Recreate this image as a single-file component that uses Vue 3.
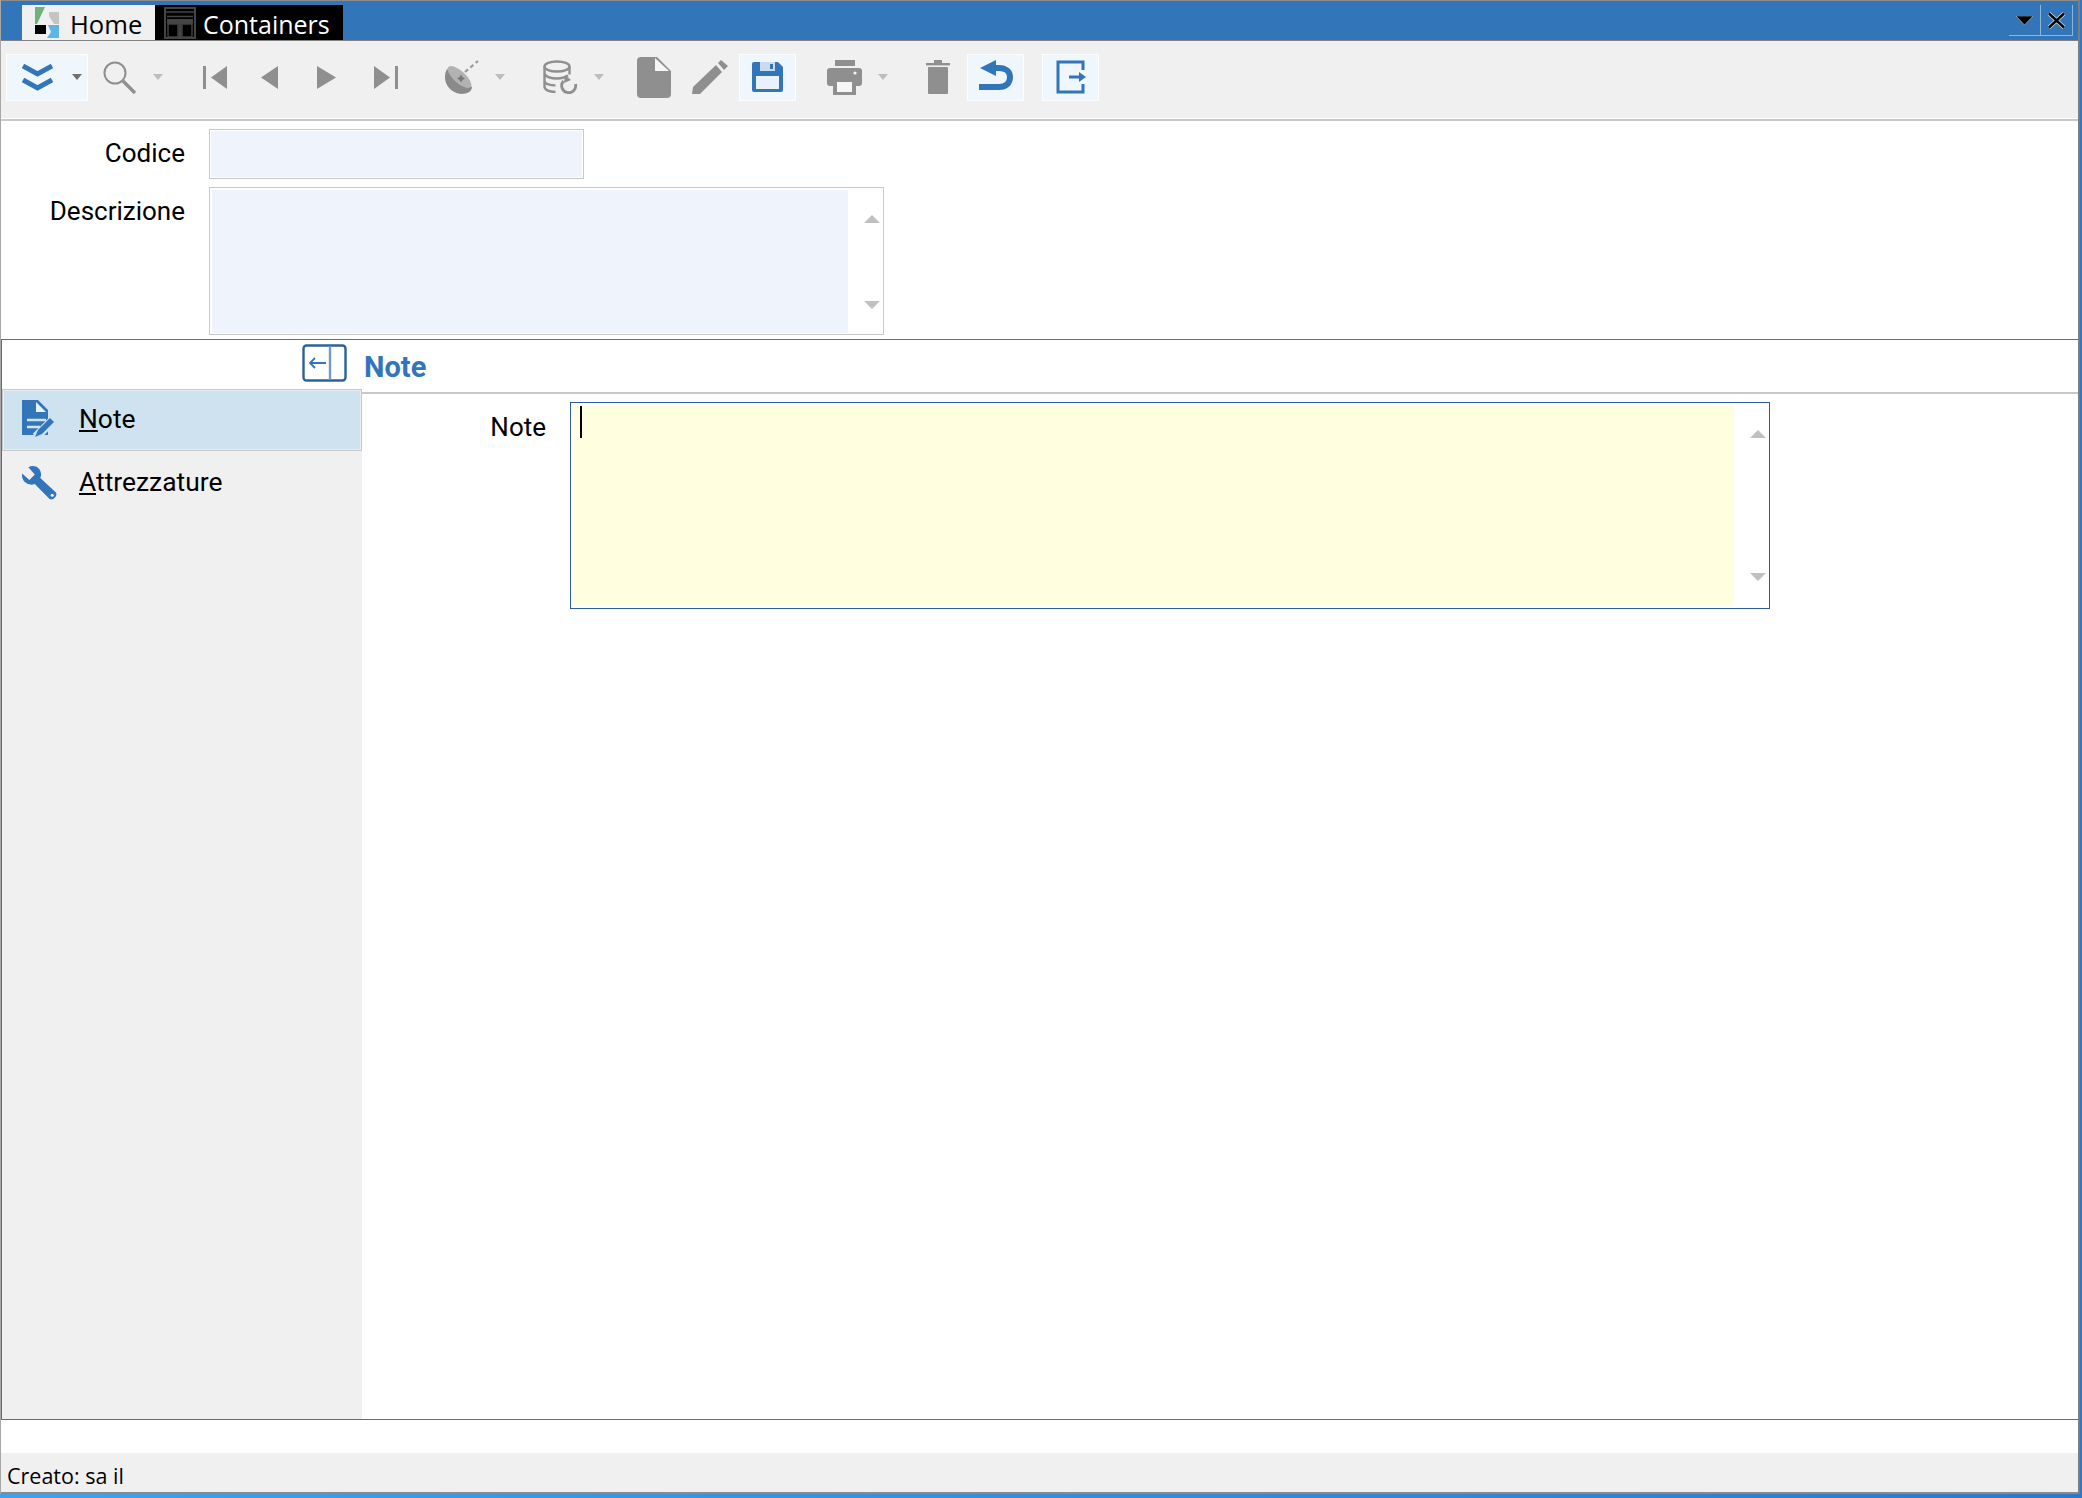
<template>
  <div class="screen">
    <div class="window">
      <div class="titlebar">
        <div class="tab tab-home">
          <svg class="logo" width="24" height="31" viewBox="0 0 24 31">
            <polygon points="0,0 10,0 2,17 0,17" fill="#6fb37b"/>
            <polygon points="14,5 24,5 24,17 19,17 14,9" fill="#c4c4c4"/>
            <rect x="0" y="18" width="11" height="9" fill="#000"/>
            <polygon points="13,18 24,18 24,31 12,31 16,25" fill="#5bb6e6"/>
          </svg>
          <span>Home</span>
        </div>
        <div class="tab tab-active">
          <svg width="32" height="32" viewBox="0 0 32 32" fill="none" stroke="#454545">
            <rect x="1" y="1" width="30" height="30" stroke-width="2"/>
            <path d="M1 5h30M3 9.5h26" stroke-width="1.4"/>
            <rect x="3" y="12" width="26" height="5" fill="#454545" stroke="none"/>
            <rect x="4" y="17" width="10" height="13" stroke-width="1.4"/>
            <rect x="18" y="17" width="10" height="13" stroke-width="1.4"/>
            <path d="M16 14v17" stroke-width="3"/>
          </svg>
          <span>Containers</span>
        </div>
        <div class="win-controls">
          <div class="win-btn win-menu">
            <svg width="17" height="9" viewBox="0 0 17 9"><polygon points="0,0 17,0 8.5,9" fill="#000" stroke="#cfd8e2" stroke-width="0.5"/></svg>
          </div>
          <div class="win-btn win-close">
            <svg width="19" height="17" viewBox="0 0 19 17" fill="none">
              <path d="M2 1.5l15 14M17 1.5l-15 14" stroke="#d5dde6" stroke-width="4"/>
              <path d="M2 1.5l15 14M17 1.5l-15 14" stroke="#000" stroke-width="2.4"/>
            </svg>
          </div>
        </div>
      </div>

      <div class="toolbar">
        <div class="tbtn t-more">
          <svg width="31" height="27" viewBox="0 0 31 27" fill="none" stroke="#3375b9" stroke-width="5">
            <path d="M1 2l14.5 8L30 2M1 16l14.5 8L30 16"/>
          </svg>
          <i class="caret dark"></i>
        </div>
        <svg class="t-search" width="34" height="33" viewBox="0 0 34 33" fill="none" stroke="#8f8f8f">
          <circle cx="12" cy="12" r="10.5" stroke-width="2"/>
          <path d="M20 20l12 12" stroke-width="3.4"/>
        </svg>
        <i class="caret c16"></i>
        <svg class="t-first" width="24" height="23" viewBox="0 0 24 23" fill="#8f8f8f">
          <rect x="0" y="0" width="3" height="23"/>
          <polygon points="8,11.5 24,0 24,23"/>
        </svg>
        <svg class="t-prev" width="17" height="23" viewBox="0 0 17 23" fill="#8f8f8f"><polygon points="0,11.5 17,0 17,23"/></svg>
        <svg class="t-next" width="19" height="23" viewBox="0 0 19 23" fill="#8f8f8f"><polygon points="19,11.5 0,0 0,23"/></svg>
        <svg class="t-last" width="24" height="23" viewBox="0 0 24 23" fill="#8f8f8f">
          <rect x="21" y="0" width="3" height="23"/>
          <polygon points="16,11.5 0,0 0,23"/>
        </svg>
        <svg class="t-dish" width="35" height="34" viewBox="0 0 35 34">
          <path d="M3 9C-2 18 2 32 17 34C24 34 28 31 28 27Z" fill="#8a8a8a"/>
          <ellipse cx="15.5" cy="17" rx="15" ry="6" transform="rotate(42 15.5 17)" fill="#b2b2b2"/>
          <path d="M17 14.5l1.5 2.5 2.5 1.5-2.5 1.5-1.5 2.5-1.5-2.5-2.5-1.5 2.5-1.5Z" fill="#7a7a7a"/>
          <path d="M21 12L34 1" stroke="#9a9a9a" stroke-width="2.2" stroke-dasharray="4 3" fill="none"/>
        </svg>
        <i class="caret c16"></i>
        <svg class="t-db" width="35" height="34" viewBox="0 0 35 34" fill="none" stroke="#8f8f8f" stroke-width="2.4">
          <ellipse cx="14" cy="6.5" rx="12.5" ry="5"/>
          <path d="M1.5 6.5v20c0 3 4 5.5 11 5.5M26.5 6.5v8M1.5 14c2 3 7 4.5 12.5 4.5s8-1 11-3M1.5 22c2 2.4 6 3.4 11 3.4"/>
          <path d="M32.5 24a7 7 0 1 1-12-3" stroke-width="2.8"/>
          <polygon points="22,15 28,20 21,23" fill="#8f8f8f" stroke="none"/>
        </svg>
        <i class="caret c16"></i>
        <svg class="t-doc" width="34" height="41" viewBox="0 0 34 41">
          <path d="M4 0H20L34 14V37a4 4 0 0 1-4 4H4a4 4 0 0 1-4-4V4a4 4 0 0 1 4-4Z" fill="#8f8f8f"/>
          <polygon points="18,1 32,14 18,14" fill="#f6f6f6"/>
        </svg>
        <svg class="t-pencil" width="36" height="34" viewBox="0 0 36 34" fill="#8f8f8f">
          <polygon points="1,27 24,5 30,12 8,34 0,34"/>
          <polygon points="26,3 29,0 36,6 32,10"/>
        </svg>
        <div class="tbtn t-save">
          <svg width="31" height="30" viewBox="0 0 31 30">
            <path d="M2 0H26L31 5V28a2 2 0 0 1-2 2H2a2 2 0 0 1-2-2V2a2 2 0 0 1 2-2Z" fill="#3375b9"/>
            <rect x="8" y="0" width="15" height="9" fill="#c9dbee"/>
            <rect x="18" y="2" width="3" height="5" fill="#3375b9"/>
            <rect x="4" y="14" width="23" height="13" fill="#eaf1f8"/>
          </svg>
        </div>
        <svg class="t-print" width="35" height="35" viewBox="0 0 35 35" fill="#8f8f8f">
          <rect x="8" y="0" width="20" height="6"/>
          <rect x="0" y="8" width="35" height="18" rx="3"/>
          <rect x="6" y="20" width="23" height="15"/>
          <rect x="10" y="22" width="15" height="10" fill="#f6f6f6"/>
          <circle cx="28" cy="13" r="1.6" fill="#f6f6f6"/>
        </svg>
        <i class="caret c16"></i>
        <svg class="t-trash" width="24" height="34" viewBox="0 0 24 34" fill="#8f8f8f">
          <rect x="8" y="0" width="8" height="3"/>
          <rect x="0" y="3" width="24" height="2.4"/>
          <rect x="2" y="7" width="20" height="27" rx="1"/>
        </svg>
        <div class="tbtn t-undo">
          <svg width="34" height="34" viewBox="0 0 34 34">
            <polygon points="1,8 17,0 17,16" fill="#3375b9"/>
            <path d="M14 8H20C27 8 31 12 31 17C31 23 27 27 20 27H0" fill="none" stroke="#3375b9" stroke-width="6"/>
          </svg>
        </div>
        <div class="tbtn t-exit">
          <svg width="30" height="34" viewBox="0 0 30 34" fill="none">
            <path d="M27 10V2H2V32H27V24" stroke="#3375b9" stroke-width="3"/>
            <path d="M13 17H25" stroke="#3375b9" stroke-width="3"/>
            <polygon points="23,12 30,17 23,22" fill="#3375b9"/>
          </svg>
        </div>
      </div>

      <div class="form">
        <div class="form-row">
          <label class="lbl">Codice</label>
          <div class="input"></div>
        </div>
        <div class="form-row">
          <label class="lbl">Descrizione</label>
          <div class="memo memo-desc">
            <div class="memo-fill"></div>
            <div class="memo-bar"><i class="arrow-up"></i><i class="arrow-down"></i></div>
          </div>
        </div>
      </div>

      <div class="panel">
        <div class="side">
          <div class="side-head">
            <svg width="45" height="38" viewBox="0 0 45 38" fill="none">
              <rect x="1.5" y="1.5" width="42" height="35" rx="3" stroke="#2d6296" stroke-width="2.4"/>
              <path d="M28 2v34" stroke="#6f9bc4" stroke-width="2.4"/>
              <path d="M24 19H8M13 14l-5 5 5 5" stroke="#3375b9" stroke-width="1.8"/>
            </svg>
          </div>
          <div class="nav">
            <div class="nav-item selected">
              <svg class="nav-icon" width="34" height="39" viewBox="0 0 34 39">
                <path d="M1 1H17L27 11V36H1Z" fill="#3375b9"/>
                <polygon points="15,3 25,13 15,13" fill="#e8f1f8"/>
                <path d="M6 21H25M6 28H19" stroke="#cfe2f0" stroke-width="2.4"/>
                <path d="M15 38L32 21" stroke="#cfe2f0" stroke-width="9"/>
                <path d="M14 38l3-7L29 19l4 4L21 35Z" fill="#3375b9"/>
              </svg>
              <span><u>N</u>ote</span>
            </div>
            <div class="nav-item">
              <svg class="nav-icon wrench" width="36" height="36" viewBox="0 0 34 34">
                <path d="M1 9L8 15L13 10L7 3C12 0 19 3 19 10C19 11 19 12 18 13L33 27C35 30 30 35 27 33L13 19C7 21 0 17 1 9Z" fill="#3375b9"/>
                <circle cx="29.5" cy="29.5" r="1.5" fill="#f0f0f0"/>
              </svg>
              <span><u>A</u>ttrezzature</span>
            </div>
          </div>
        </div>
        <div class="detail">
          <div class="detail-head">Note</div>
          <div class="detail-body">
            <label class="lbl lbl-note">Note</label>
            <div class="memo memo-note">
              <div class="memo-fill"><div class="cursor"></div></div>
              <div class="memo-bar"><i class="arrow-up"></i><i class="arrow-down"></i></div>
            </div>
          </div>
        </div>
      </div>

      <div class="spacer"></div>
      <div class="status">Creato: sa il</div>
    </div>
  </div>
</template>

<script setup>
</script>

<style>
html, body {
  margin: 0;
  padding: 0;
}
</style>

<style scoped>
.screen {
  width: 2082px;
  height: 1498px;
  overflow: hidden;
  background: linear-gradient(90deg, #3fa2e8, #2f78c8);
}

.window {
  width: 2080px;
  height: 1494px;
  box-sizing: border-box;
  display: flex;
  flex-direction: column;
  background: #fff;
  border-left: 1px solid #a8a8a8;
  border-right: 2px solid #7d7d7d;
}

.titlebar {
  height: 41px;
  flex-shrink: 0;
  box-sizing: border-box;
  display: flex;
  align-items: flex-end;
  padding-left: 21px;
  background: #3375b9;
  border-top: 1px solid #8c8c8c;
  border-bottom: 1px solid #808080;
}

.tab {
  height: 35px;
  display: flex;
  align-items: center;
  font-family: "Open Sans", "Noto Sans", sans-serif;
  font-size: 25px;
  white-space: nowrap;
}

.tab span {
  margin-top: 3px;
}

.tab-home {
  width: 133px;
  box-sizing: border-box;
  padding-left: 13px;
  gap: 11px;
  font-size: 25.6px;
  background: #f0f0f0;
  color: #000;
}

.tab-active {
  width: 188px;
  box-sizing: border-box;
  padding-left: 9px;
  gap: 7px;
  background: #000;
  color: #fff;
}

.win-controls {
  margin-left: auto;
  margin-right: 5px;
  align-self: flex-start;
  margin-top: 4px;
  display: flex;
  height: 30px;
  border-bottom: 1px solid #8db5da;
}

.win-btn {
  display: flex;
  align-items: center;
  justify-content: center;
}

.win-menu {
  width: 31px;
}

.win-close {
  width: 31px;
  border-left: 1px solid #8db5da;
  border-right: 1px solid #8db5da;
}

.toolbar {
  height: 80px;
  flex-shrink: 0;
  box-sizing: border-box;
  display: flex;
  align-items: center;
  padding: 0 0 6px 5px;
  background: #f0f0f0;
  border-bottom: 2px solid #c8c8c8;
  box-shadow: inset 0 -1px 0 #fff;
}

.tbtn {
  height: 47px;
  box-sizing: border-box;
  flex-shrink: 0;
  display: flex;
  align-items: center;
  justify-content: center;
  background: #eff6fc;
  border: 1px solid #fbfdff;
}

.t-more {
  width: 82px;
  justify-content: flex-start;
  padding-left: 15px;
}

.t-more .caret {
  margin-left: 19px;
}

.caret {
  width: 0;
  height: 0;
  flex-shrink: 0;
  border-left: 5.5px solid transparent;
  border-right: 5.5px solid transparent;
  border-top: 6px solid #bdbdbd;
}

.caret.dark {
  border-top-color: #707070;
}

.c16 {
  margin-left: 16px;
}

.toolbar > svg {
  flex-shrink: 0;
}

.t-search { margin-left: 15px; }
.t-first { margin-left: 40px; }
.t-prev { margin-left: 34px; }
.t-next { margin-left: 39px; }
.t-last { margin-left: 38px; }
.t-dish { margin-left: 46px; }
.t-db { margin-left: 38px; }
.t-doc { margin-left: 33px; }
.t-pencil { margin-left: 21px; }
.t-save { width: 57px; margin-left: 11px; }
.t-print { margin-left: 31px; }
.t-trash { margin-left: 38px; }
.t-undo { width: 57px; margin-left: 17px; }
.t-exit { width: 57px; margin-left: 18px; }

.form {
  height: 218px;
  flex-shrink: 0;
  box-sizing: border-box;
  padding-top: 8px;
  display: flex;
  flex-direction: column;
  gap: 8px;
}

.form-row {
  display: flex;
  gap: 24px;
}

.lbl {
  width: 184px;
  height: 48px;
  line-height: 48px;
  text-align: right;
  font-family: Roboto, sans-serif;
  font-size: 26px;
  color: #000;
}

.input {
  width: 375px;
  height: 50px;
  box-sizing: border-box;
  background: #eff4fc;
  border: 1.5px solid #c8c8c8;
  box-shadow: inset 0 0 0 1px #fff;
}

.memo {
  box-sizing: border-box;
  display: flex;
  background: #fff;
}

.memo-desc {
  width: 675px;
  height: 148px;
  border: 1.5px solid #c8c8c8;
  padding: 2px 0 1px 2px;
}

.memo-desc .memo-fill {
  background: #eff4fc;
}

.memo-desc .memo-bar {
  width: 35px;
  padding-bottom: 24px;
}

.memo-fill {
  flex: 1;
}

.memo-bar {
  width: 35px;
  flex-shrink: 0;
  box-sizing: border-box;
  display: flex;
  flex-direction: column;
  justify-content: space-between;
  padding: 25px 0 25px 16px;
}

.arrow-up,
.arrow-down {
  width: 0;
  height: 0;
  border-left: 8px solid transparent;
  border-right: 8px solid transparent;
}

.arrow-up {
  border-bottom: 8px solid #c0c0c0;
}

.arrow-down {
  border-top: 8px solid #c0c0c0;
}

.panel {
  flex: 1;
  min-height: 0;
  display: flex;
  border-top: 1px solid #6b6b6b;
  border-bottom: 1px solid #6b6b6b;
  border-left: 1px solid #6b6b6b;
}

.side {
  width: 360px;
  flex-shrink: 0;
  display: flex;
  flex-direction: column;
}

.side-head {
  height: 49px;
  flex-shrink: 0;
  box-sizing: border-box;
  display: flex;
  justify-content: flex-end;
  padding: 4px 15px 0 0;
}

.nav {
  flex: 1;
  background: #f0f0f0;
}

.nav-item {
  height: 62px;
  box-sizing: border-box;
  display: flex;
  align-items: center;
  gap: 24px;
  padding-left: 19px;
  font-family: Roboto, sans-serif;
  font-size: 26.4px;
  color: #000;
}

.nav-item span {
  margin-bottom: 2px;
}

.nav-icon {
  margin-bottom: 3px;
}

.nav-icon.wrench {
  margin-right: -2px;
}

.nav-item.selected {
  padding-left: 18px;
  background: #cfe2f0;
  border: 1.5px solid #c8c8c8;
  box-shadow: inset 0 0 0 1px #e6eff6;
}

.nav-item + .nav-item {
  margin-top: 1px;
}

.detail {
  flex: 1;
  display: flex;
  flex-direction: column;
}

.detail-head {
  height: 54px;
  flex-shrink: 0;
  box-sizing: border-box;
  padding: 4px 0 0 2px;
  line-height: 47px;
  font-family: Roboto, sans-serif;
  font-size: 29px;
  font-weight: 700;
  color: #3375b9;
  border-bottom: 2px solid #c8c8c8;
}

.detail-body {
  display: flex;
  gap: 24px;
  padding-top: 8px;
}

.lbl-note {
  width: 184px;
  line-height: 50px;
}

.memo-note {
  width: 1200px;
  height: 207px;
  border: 1.5px solid #2f5aa0;
  padding: 2px 0 2px 2px;
}

.memo-note .memo-fill {
  background: #ffffe0;
  padding: 1px 0 0 7px;
}

.cursor {
  width: 1.5px;
  height: 32px;
  background: #000;
}

.spacer {
  height: 33px;
  flex-shrink: 0;
}

.status {
  height: 41px;
  flex-shrink: 0;
  box-sizing: border-box;
  padding: 5px 0 0 6px;
  line-height: 36px;
  background: #f0f0f0;
  border-bottom: 2px solid #8a8a8a;
  font-family: "Open Sans", "Noto Sans", sans-serif;
  font-size: 21.5px;
  color: #000;
}
</style>
